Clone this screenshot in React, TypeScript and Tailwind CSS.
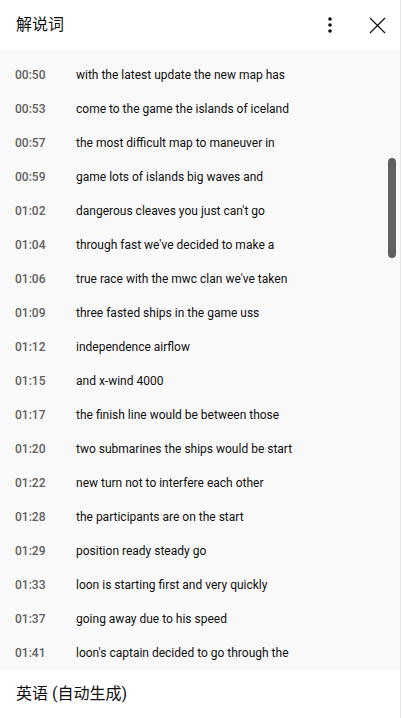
import React from "react";

const lines: [string, string][] = [
    ["00:50", "with the latest update the new map has"],
    ["00:53", "come to the game the islands of iceland"],
    ["00:57", "the most difficult map to maneuver in"],
    ["00:59", "game lots of islands big waves and"],
    ["01:02", "dangerous cleaves you just can't go"],
    ["01:04", "through fast we've decided to make a"],
    ["01:06", "true race with the mwc clan we've taken"],
    ["01:09", "three fasted ships in the game uss"],
    ["01:12", "independence airflow"],
    ["01:15", "and x-wind 4000"],
    ["01:17", "the finish line would be between those"],
    ["01:20", "two submarines the ships would be start"],
    ["01:22", "new turn not to interfere each other"],
    ["01:28", "the participants are on the start"],
    ["01:29", "position ready steady go"],
    ["01:33", "loon is starting first and very quickly"],
    ["01:37", "going away due to his speed"],
    ["01:41", "loon's captain decided to go through the"],
];

export default function App() {
    return (
        <div
            className="w-[401px] h-[718px] flex flex-col bg-white border-r border-[#e3e3e3] text-[#0f0f0f]"
            style={{fontFamily: 'Roboto, "Noto Sans CJK SC", sans-serif'}}
        >
            {/* Header */}
            <div className="h-[50px] flex items-center pl-4 pr-[11px] shrink-0">
                <h2 className="text-[16px] flex-1">解说词</h2>
                <button className="w-[24px] h-[24px] flex items-center justify-center mr-[23px]">
                    <svg width="4" height="16" viewBox="0 0 4 16" fill="#0f0f0f">
                        <circle cx="2" cy="2" r="1.8"/>
                        <circle cx="2" cy="8" r="1.8"/>
                        <circle cx="2" cy="14" r="1.8"/>
                    </svg>
                </button>
                <button className="w-[24px] h-[24px] flex items-center justify-center">
                    <svg width="17" height="17" viewBox="0 0 17 17" stroke="#0f0f0f" strokeWidth="1.2">
                        <path d="M1 1 L16 16 M16 1 L1 16"/>
                    </svg>
                </button>
            </div>

            {/* Transcript */}
            <div className="relative flex-1 bg-[#f9f9f9] pt-2 overflow-hidden">
                {lines.map(([time, text]) => (
                    <div key={time} className="h-[34px] flex items-center text-[12px]">
                        <span className="w-[76px] pl-[15px] font-medium text-[#606060]">{time}</span>
                        <span>{text}</span>
                    </div>
                ))}
                <div className="absolute right-[4px] top-[108px] w-[8px] h-[100px] rounded-full bg-[#606060]"/>
            </div>

            {/* Footer */}
            <div className="h-[48px] flex items-center pl-4 shrink-0">
                <span className="text-[16px]">英语 (自动生成)</span>
            </div>
        </div>
    );
}
